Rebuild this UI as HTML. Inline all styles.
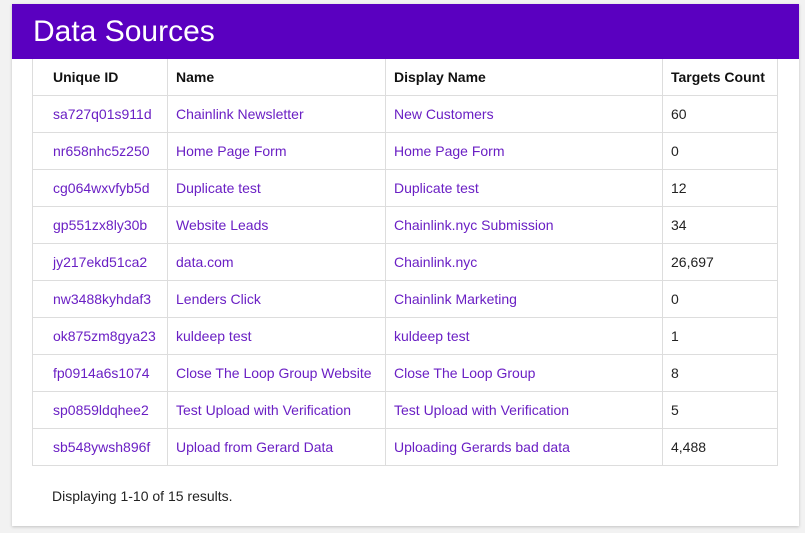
<!DOCTYPE html>
<html><head><style>
body{margin:0;background:#f2f2f2;font-family:"Liberation Sans",sans-serif;width:805px;height:533px;overflow:hidden}
.card{position:absolute;left:12px;top:4px;width:787px;height:522px;background:#fff;box-shadow:0 1px 3px rgba(0,0,0,.2)}
.hd{height:55px;background:#5a00c0;color:#fff;font-size:30px;line-height:55px;padding-left:21px;font-weight:300}
table{position:absolute;left:20px;top:55px;border-collapse:collapse;font-size:14px}
td,th{border:1px solid #ddd;height:36px;padding:0 0 0 20px;text-align:left;box-sizing:content-box}
th{font-weight:bold;color:#111;padding-left:20px}
th:nth-child(2),td:nth-child(2),th:nth-child(3),td:nth-child(3),th:nth-child(4),td:nth-child(4){padding-left:8px}
td{color:#6a1fc4}
td:nth-child(4){color:#222}
tr:first-child th{border-top:none}
.ft{position:absolute;left:40px;top:484px;font-size:14px;color:#222}
</style></head><body>
<div class="card">
<div class="hd">Data Sources</div>
<table>
<colgroup><col style="width:135px"><col style="width:218px"><col style="width:277px"><col style="width:115px"></colgroup>
<tr><th>Unique ID</th><th>Name</th><th>Display Name</th><th>Targets Count</th></tr>
<tr><td>sa727q01s911d</td><td>Chainlink Newsletter</td><td>New Customers</td><td>60</td></tr>
<tr><td>nr658nhc5z250</td><td>Home Page Form</td><td>Home Page Form</td><td>0</td></tr>
<tr><td>cg064wxvfyb5d</td><td>Duplicate test</td><td>Duplicate test</td><td>12</td></tr>
<tr><td>gp551zx8ly30b</td><td>Website Leads</td><td>Chainlink.nyc Submission</td><td>34</td></tr>
<tr><td>jy217ekd51ca2</td><td>data.com</td><td>Chainlink.nyc</td><td>26,697</td></tr>
<tr><td>nw3488kyhdaf3</td><td>Lenders Click</td><td>Chainlink Marketing</td><td>0</td></tr>
<tr><td>ok875zm8gya23</td><td>kuldeep test</td><td>kuldeep test</td><td>1</td></tr>
<tr><td>fp0914a6s1074</td><td>Close The Loop Group Website</td><td>Close The Loop Group</td><td>8</td></tr>
<tr><td>sp0859ldqhee2</td><td>Test Upload with Verification</td><td>Test Upload with Verification</td><td>5</td></tr>
<tr><td>sb548ywsh896f</td><td>Upload from Gerard Data</td><td>Uploading Gerards bad data</td><td>4,488</td></tr>
</table>
<div class="ft">Displaying 1-10 of 15 results.</div>
</div>
</body></html>
